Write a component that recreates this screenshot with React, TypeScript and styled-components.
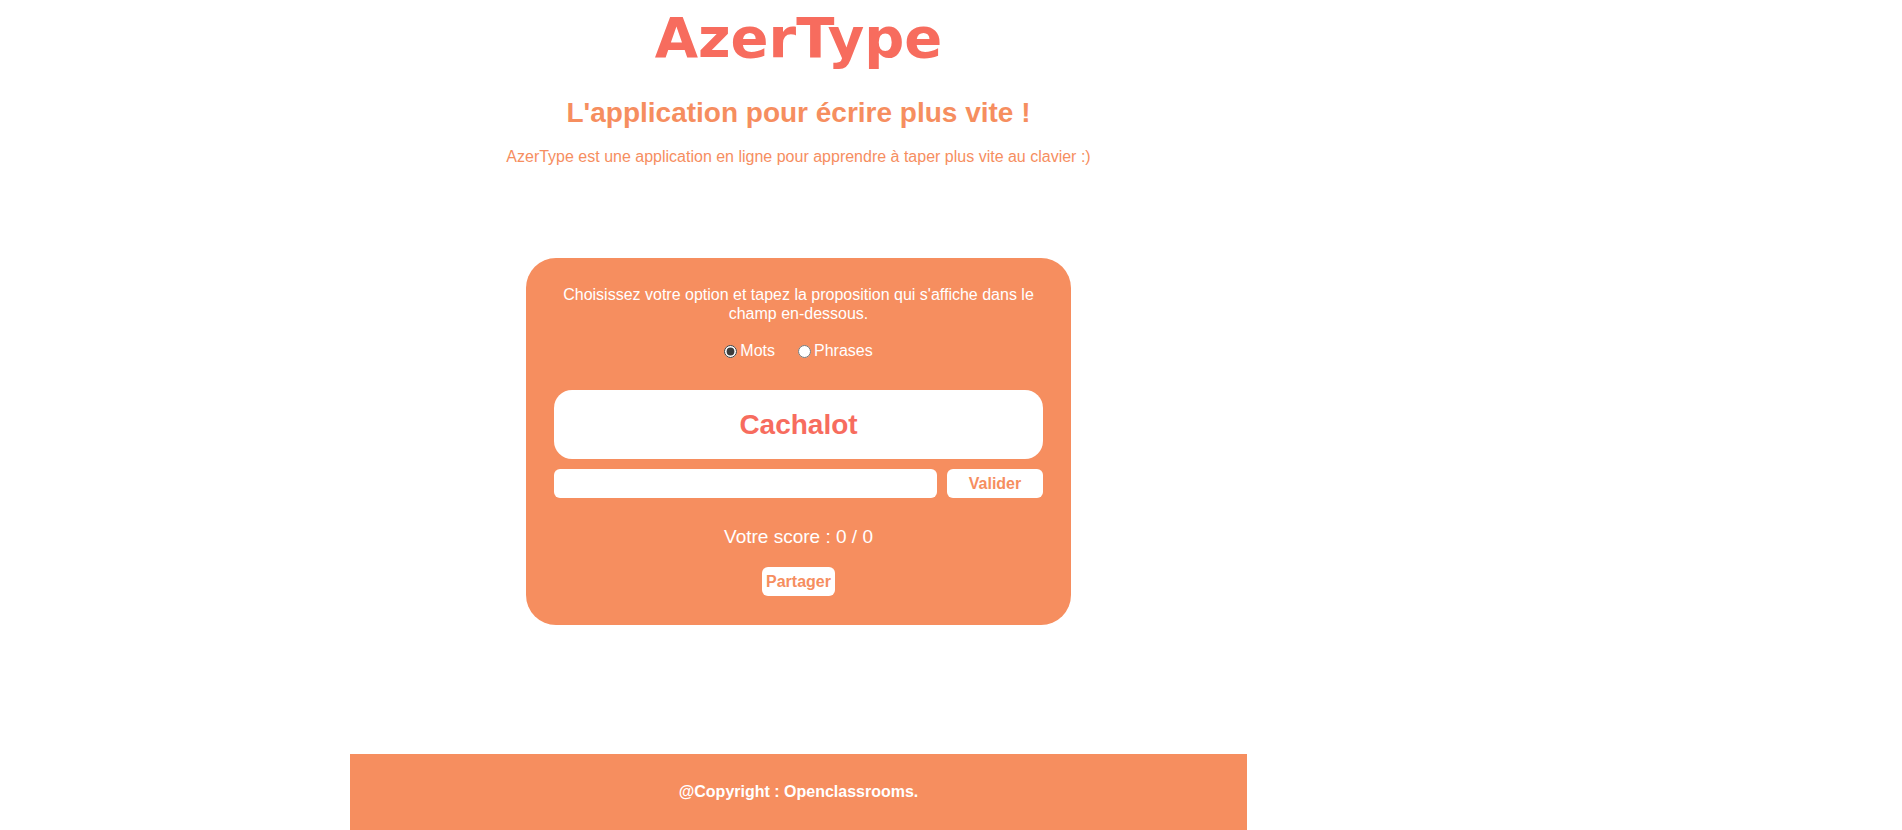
import React from "react";
import styled, { createGlobalStyle } from "styled-components";

const ORANGE = "#f68e5f";
const RED = "#f76c5e";

const GlobalStyle = createGlobalStyle`
  html { overflow-y: scroll; }
  html, body { margin: 0; padding: 0; background: #ffffff; }
  body { font-family: "Liberation Sans", Arial, sans-serif; }
  * { box-sizing: border-box; }
`;

const Page = styled.div`
  width: 897px;
  margin-left: 350px;
  display: flex;
  flex-direction: column;
  align-items: center;
`;

const Header = styled.header`
  display: flex;
  flex-direction: column;
  align-items: center;
  padding-top: 5px;
`;

const Title = styled.h1`
  margin: 0;
  font-family: "DejaVu Sans", Verdana, sans-serif;
  font-size: 56px;
  font-weight: 700;
  color: ${RED};
  line-height: normal;
`;

const Subtitle = styled.h2`
  margin: 27px 0 0;
  font-size: 28px;
  font-weight: 700;
  color: ${ORANGE};
  line-height: normal;
`;

const Intro = styled.p`
  margin: 19px 0 0;
  font-size: 16px;
  line-height: normal;
  color: ${ORANGE};
`;

const Card = styled.main`
  margin-top: 92px;
  width: 545px;
  background: ${ORANGE};
  border-radius: 30px;
  padding: 27px 28px 29px;
  display: flex;
  flex-direction: column;
  align-items: stretch;
  color: #ffffff;
`;

const Instructions = styled.p`
  margin: 0;
  font-size: 16px;
  line-height: 19px;
  text-align: center;
`;

const Options = styled.div`
  margin-top: 19px;
  display: flex;
  justify-content: center;
  gap: 23px;
  font-size: 16px;
  line-height: normal;
`;

const Option = styled.label`
  display: flex;
  align-items: center;
  input {
    margin: 0 3px 0 0;
    width: 13px;
    height: 13px;
    accent-color: #3c3c3c;
  }
`;

const Proposal = styled.div`
  margin-top: 30px;
  height: 69px;
  background: #ffffff;
  border-radius: 18px;
  display: flex;
  align-items: center;
  justify-content: center;
  color: ${RED};
  font-size: 28px;
  font-weight: 700;
`;

const InputRow = styled.div`
  margin-top: 10px;
  display: flex;
  gap: 10px;
`;

const TextInput = styled.input`
  flex: 1;
  height: 29px;
  border: none;
  border-radius: 6px;
  background: #ffffff;
  outline: none;
`;

const Button = styled.button<{ $wide?: boolean }>`
  height: 29px;
  width: ${(p) => (p.$wide ? "96px" : "auto")};
  padding: 0 4px;
  border: none;
  border-radius: 6px;
  background: #ffffff;
  color: ${ORANGE};
  font-family: "Liberation Sans", Arial, sans-serif;
  font-size: 16px;
  font-weight: 700;
  cursor: pointer;
`;

const Score = styled.p`
  margin: 28px 0 0;
  text-align: center;
  font-size: 19px;
  line-height: normal;
`;

const ShareRow = styled.div`
  margin-top: 19px;
  display: flex;
  justify-content: center;
`;

const Footer = styled.footer`
  margin-top: 129px;
  width: 100%;
  height: 77px;
  background: ${ORANGE};
  color: #ffffff;
  font-weight: 700;
  font-size: 16px;
  line-height: normal;
  display: flex;
  justify-content: center;
  padding-top: 29px;
`;

export default function App() {
  return (
    <>
      <GlobalStyle />
      <Page>
        <Header>
          <Title>AzerType</Title>
          <Subtitle>L'application pour écrire plus vite !</Subtitle>
          <Intro>
            AzerType est une application en ligne pour apprendre à taper plus vite au clavier :)
          </Intro>
        </Header>
        <Card>
          <Instructions>
            Choisissez votre option et tapez la proposition qui s'affiche dans le champ en-dessous.
          </Instructions>
          <Options>
            <Option>
              <input type="radio" name="mode" defaultChecked />
              Mots
            </Option>
            <Option>
              <input type="radio" name="mode" />
              Phrases
            </Option>
          </Options>
          <Proposal>Cachalot</Proposal>
          <InputRow>
            <TextInput type="text" />
            <Button $wide>Valider</Button>
          </InputRow>
          <Score>Votre score : 0 / 0</Score>
          <ShareRow>
            <Button>Partager</Button>
          </ShareRow>
        </Card>
        <Footer>@Copyright : Openclassrooms.</Footer>
      </Page>
    </>
  );
}
